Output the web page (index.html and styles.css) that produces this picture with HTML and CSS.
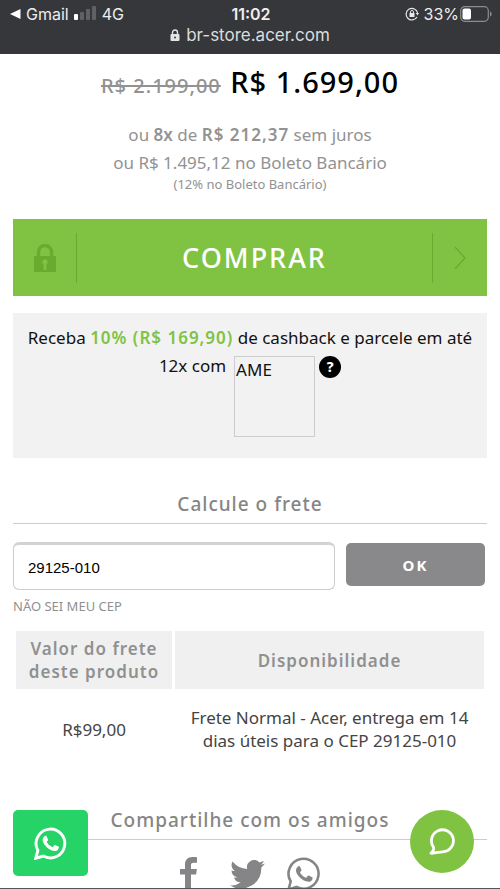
FILE: index.html
```html
<!DOCTYPE html>
<html lang="pt-BR">
<head>
<meta charset="utf-8">
<meta name="viewport" content="width=device-width, initial-scale=1">
<title>Acer Store</title>
<link rel="stylesheet" href="styles.css">
</head>
<body>
<header class="browser">
  <div class="status">
    <div class="status-left">
      <svg width="11" height="12" viewBox="0 0 11 12"><path d="M0 6L10.500 1v10z" fill="#fff"/></svg>
      <span>Gmail</span>
      <svg class="signal" width="23" height="15" viewBox="0 0 23 15"><rect y="9" width="4" height="6" rx="1" fill="#fff"/><g fill="#606165"><rect x="6" y="7" width="4" height="8" rx="1"/><rect x="12" y="4" width="4" height="11" rx="1"/><rect x="18" y="1" width="4" height="14" rx="1"/></g></svg>
      <span>4G</span>
    </div>
    <span class="clock">11:02</span>
    <div class="status-right">
      <svg width="14" height="14" viewBox="0 0 14 14" fill="none" stroke="#e8e8e8"><path d="M12.600 6A5.800 5.800 0 1 0 12 10" stroke-width="1.200"/><path d="M10.800 6h3.200l-1.500 2.400z" fill="#e8e8e8" stroke="none"/><rect x="4.500" y="6" width="5" height="4" rx=".6" fill="#e8e8e8" stroke="none"/><path d="M5.500 6V5a1.500 1.500 0 0 1 3 0v1"/></svg>
      <span>33%</span>
      <svg class="battery" width="32" height="16" viewBox="0 0 32 16"><rect x=".7" y=".7" width="27.600" height="14.600" rx="4" fill="none" stroke="#8b8c8f" stroke-width="1.200"/><rect x="2.500" y="2.500" width="8.500" height="11" rx="2" fill="#fff"/><path d="M30 5.500c2.200.5 2.200 4.500 0 5z" fill="#8b8c8f"/></svg>
    </div>
  </div>
  <div class="address">
    <svg width="10" height="12" viewBox="0 0 10 12"><rect x=".5" y="5" width="9" height="7" rx="1" fill="#e4e4e5"/><path d="M2.500 5.500V3.500a2.500 2.500 0 0 1 5 0v2" fill="none" stroke="#e4e4e5" stroke-width="1.400"/><circle cx="5" cy="8.500" r="1" fill="#36373b"/></svg>
    <span>br-store.acer.com</span>
  </div>
</header>

<main class="page">
  <section class="price">
    <p class="price-main"><s>R$ 2.199,00</s> <strong>R$ 1.699,00</strong></p>
    <p>ou <b>8x</b> de <b class="amount">R$ 212,37</b> sem juros</p>
    <p>ou R$ 1.495,12 no Boleto Bancário</p>
    <p class="price-note">(12% no Boleto Bancário)</p>
  </section>

  <button class="buy" type="button">
    <span class="buy-lock"><svg width="22" height="28" viewBox="0 0 22 28"><path d="M4.500 13V8a6.500 6.500 0 0 1 13 0v5" fill="none" stroke="#68ab2f" stroke-width="3.400"/><path d="M0 12h22v16H0zM9.600 20.200V26h2.800v-5.800a2.600 2.600 0 1 0-2.800 0z" fill="#68ab2f" fill-rule="evenodd"/></svg></span>
    <span class="buy-label">COMPRAR</span>
    <span class="buy-next"><svg width="12" height="24" viewBox="0 0 12 24"><path d="M1 1l10 11L1 23" fill="none" stroke="#68ab2f" stroke-width="1.400"/></svg></span>
  </button>

  <section class="cashback">
    <p>Receba <b>10% (R$ 169,90)</b> de cashback e parcele em até</p>
    <div class="cashback-row">
      <span>12x com</span>
      <div class="ame">AME</div>
      <button class="help" type="button" aria-label="Ajuda">?</button>
    </div>
  </section>

  <section>
    <h2>Calcule o frete</h2>
    <form class="shipping">
      <input type="text" aria-label="CEP" value="29125-010">
      <button type="button">OK</button>
    </form>
    <a class="cep-link" href="#">NÃO SEI MEU CEP</a>
    <table>
      <thead><tr><th class="cost">Valor do frete deste produto</th><th>Disponibilidade</th></tr></thead>
      <tbody><tr><td>R$99,00</td><td>Frete Normal - Acer, entrega em 14 dias úteis para o CEP 29125-010</td></tr></tbody>
    </table>
  </section>

  <section class="share">
    <h2>Compartilhe com os amigos</h2>
    <div class="social">
      <a href="#" aria-label="Facebook"><svg width="18" height="34" viewBox="0 0 18 34"><path d="M17 .3v5.400h-3.300c-2.300 0-2.700 1-2.700 2.600V12h5.900l-.8 5.500H11V34H5V17.500H0V12h5V7.600C5 2.700 8 0 12.400 0c2.100 0 3.900.1 4.600.3z" fill="#858588"/></svg></a>
      <a href="#" aria-label="Twitter"><svg width="35" height="29" viewBox="0 0 24 20"><path d="M24 2.400a9.800 9.800 0 0 1-2.800.8A5 5 0 0 0 23.300.5a9.900 9.900 0 0 1-3.100 1.200 4.900 4.900 0 0 0-8.400 4.500A14 14 0 0 1 1.700 1a4.900 4.900 0 0 0 1.500 6.600A4.900 4.900 0 0 1 1 7v.1a4.900 4.900 0 0 0 3.900 4.800 5 5 0 0 1-2.200.1 4.900 4.900 0 0 0 4.600 3.400A9.900 9.900 0 0 1 0 17.500 14 14 0 0 0 21.500 5.100 10 10 0 0 0 24 2.400z" fill="#858588"/></svg></a>
      <a href="#" aria-label="WhatsApp"><svg width="34" height="34" viewBox="0 0 34 34"><path d="M1.500 32.500l2.200-8A15 15 0 1 1 9.500 30z" fill="none" stroke="#858588" stroke-width="2.600"/><path d="M11.300 9.300c.6-.5 1.400-.4 1.700.3l1.400 3.200c.2.600-.1 1-1.300 2.500-.3.400 2.600 4.500 5.900 5.400.5.100 1.400-1.300 1.900-1.900.4-.5.800-.4 1.300-.1l3 1.500c1.200.6-.4 3.500-1.300 4-3.300 1.800-8.300-.8-11-3.600-5.400-5.600-4.500-9.100-1.600-11.300z" fill="#858588"/></svg></a>
    </div>
  </section>
</main>

<a class="float whatsapp" href="#" aria-label="WhatsApp"><svg width="33" height="33" viewBox="0 0 34 34"><path d="M1.800 32.200l2.200-8A14.800 14.800 0 1 1 9.700 29.900z" fill="none" stroke="#fff" stroke-width="3"/><path d="M11.300 9.300c.6-.5 1.400-.4 1.700.3l1.400 3.200c.2.600-.1 1-1.300 2.500-.3.400 2.600 4.500 5.900 5.400.5.100 1.400-1.300 1.900-1.900.4-.5.800-.4 1.300-.1l3 1.500c1.200.6-.4 3.500-1.300 4-3.300 1.800-8.300-.8-11-3.600-5.400-5.600-4.500-9.100-1.600-11.300z" fill="#fff"/></svg></a>
<button class="float chat" type="button" aria-label="Chat"><svg width="26" height="27" viewBox="0 0 26 27"><path d="M4.500 19.200A11 11 0 1 1 13.500 23.800C10 23.800 6 25.500 2 25.200c2-1.500 3.200-3.500 2.500-6z" fill="none" stroke="#fff" stroke-width="2.800" stroke-linejoin="round"/></svg></button>
<div class="browser-bottom"></div>
</body>
</html>
```

FILE: styles.css
```css
* { box-sizing: border-box; }

html { overflow: hidden; }

body {
  margin: 0;
  background: #fff;
  color: #111;
  font: 17px/24px "Noto Sans", sans-serif;
}

p, h2 { margin: 0; }
svg { display: block; flex: none; }
a { color: inherit; text-decoration: none; }
button { border: 0; padding: 0; font-family: inherit; cursor: pointer; }

.browser {
  height: 54px;
  background: #36373b;
  color: #eee;
  font: 16px/20px Inter, sans-serif;
}

.status {
  display: grid;
  grid-template-columns: 1fr auto 1fr;
  align-items: center;
  height: 25px;
  padding: 2px 8px 0 10px;
}

.status-left, .status-right { display: flex; align-items: center; gap: 5px; }
.status-right { justify-content: flex-end; }
.signal { margin-top: -2px; }
.battery { margin-left: -4px; }
.clock { font-weight: 600; }

.address {
  display: flex;
  justify-content: center;
  align-items: center;
  gap: 6px;
  color: #dcdcde;
  font-size: 17px;
}

.page { padding: 0 13px; }

.price {
  padding-top: 7px;
  color: #929292;
  text-align: center;
  line-height: 28px;
}

.price-main { margin-bottom: 13px; line-height: 42px; letter-spacing: 1px; }
.price-main s { font-size: 20px; font-weight: 500; margin-right: 4px; }
.price-main strong { color: #000; font-size: 29px; font-weight: 500; }
.price b { font-weight: 600; }
.price .amount { letter-spacing: 1px; }
.price .price-note { font-size: 13px; line-height: 14px; }

.buy {
  display: flex;
  align-items: center;
  width: 100%;
  height: 77px;
  margin-top: 28px;
  background: #80c342;
  color: #fff;
}

.buy-lock, .buy-next {
  display: flex;
  align-items: center;
  justify-content: center;
  height: 50px;
}

.buy-lock { width: 64px; border-right: 1px solid #68ab2f; }
.buy-next { width: 55px; border-left: 1px solid #68ab2f; }
.buy-label { flex: 1; font-size: 27px; font-weight: 500; letter-spacing: 2px; }

.cashback {
  height: 145px;
  margin-top: 17px;
  padding-top: 13px;
  background: #f2f2f2;
  text-align: center;
}

.cashback b { color: #80c342; font-weight: 600; letter-spacing: 1px; }

.cashback-row {
  display: flex;
  justify-content: center;
  align-items: flex-start;
  padding-top: 4px;
  gap: 4px;
}

.ame {
  width: 81px;
  height: 81px;
  margin: 2px 0 0 4px;
  padding: 1px;
  border: 1px solid #ccc;
  text-align: left;
}

.help {
  width: 22px;
  height: 22px;
  margin-top: 2px;
  border-radius: 50%;
  background: #000;
  color: #fff;
  font-size: 14px;
  font-weight: 800;
  line-height: 22px;
}

h2 {
  padding-bottom: 5px;
  border-bottom: 1px solid #ccc;
  color: #858585;
  font-size: 19px;
  font-weight: 500;
  line-height: 28px;
  letter-spacing: 1px;
  text-align: center;
}

.cashback + section { margin-top: 32px; }

.shipping {
  display: grid;
  grid-template-columns: 322px 1fr;
  gap: 11px;
  align-items: start;
  margin-top: 18px;
  padding-right: 2px;
}

.shipping input {
  width: 100%;
  height: 48px;
  padding: 0 14px;
  border: 1px solid #ccc;
  border-top: 3px solid #d3d3d3;
  border-radius: 6px;
  background: #fff;
  color: #000;
  font: 15px "Liberation Sans", sans-serif;
}

.shipping button {
  height: 43px;
  margin-top: 1px;
  border-radius: 5px;
  background: #89898c;
  color: #fff;
  font-size: 15px;
  font-weight: 700;
  letter-spacing: 2px;
}

.cep-link {
  display: block;
  margin-top: 6px;
  color: #909090;
  font-size: 13px;
  line-height: 20px;
}

table {
  width: 100%;
  margin-top: 12px;
  border-spacing: 3px;
  color: #444;
  line-height: 23px;
  text-align: center;
}

th {
  height: 58px;
  padding: 6px 12px;
  background: #f0f0f0;
  color: #909090;
  font-size: 17px;
  font-weight: 600;
  letter-spacing: 1px;
}

.cost { width: 156px; }
td { padding: 14px 12px; }

.share { margin-top: 37px; }

.social {
  display: flex;
  justify-content: center;
  align-items: flex-start;
  gap: 32px;
  padding-top: 17px;
}

.social a:nth-child(2) { padding-top: 3px; }
.social a:last-child { margin-left: -10px; }

.float {
  position: fixed;
  display: flex;
  align-items: center;
  justify-content: center;
}

.whatsapp {
  left: 13px;
  bottom: 13px;
  width: 75px;
  height: 66px;
  border-radius: 5px;
  background: #25d366;
}

.chat {
  right: 26px;
  bottom: 16px;
  width: 64px;
  height: 63px;
  border-radius: 50%;
  background: #80c342;
}

.browser-bottom {
  position: fixed;
  inset: auto 0 0;
  height: 1px;
  background: #555558;
}
```
